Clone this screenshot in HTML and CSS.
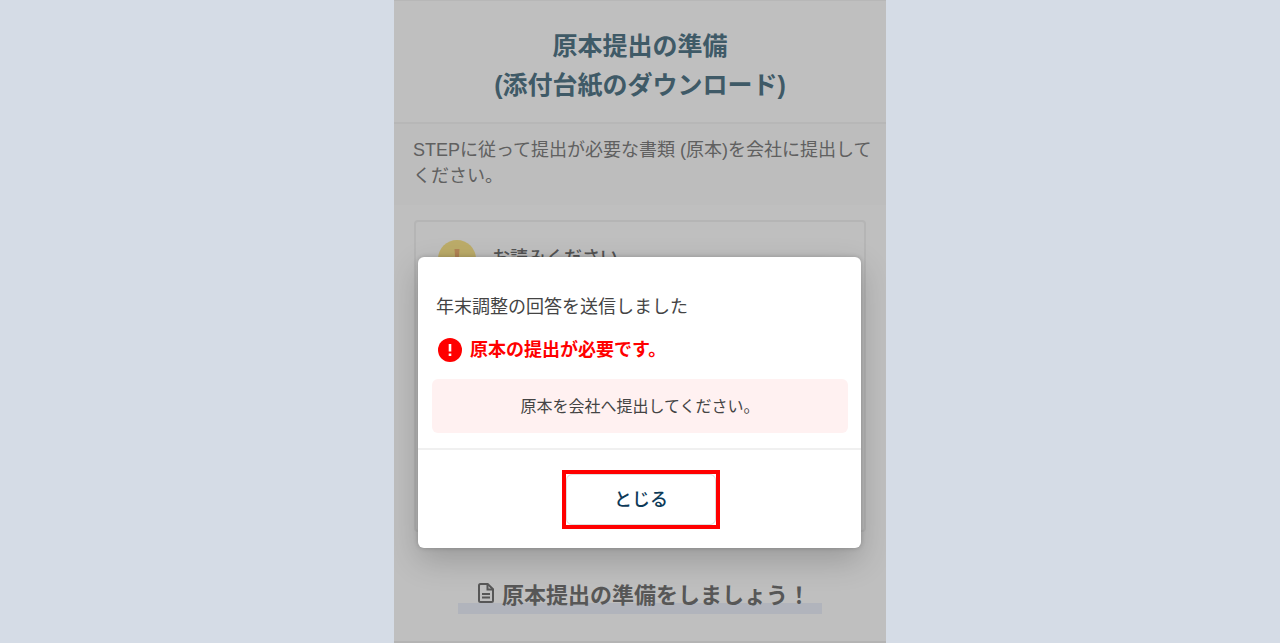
FILE: index.html
```
<!DOCTYPE html>
<html lang="ja">
<head>
  <meta charset="UTF-8">
  <meta name="viewport" content="width=device-width, initial-scale=1.0">
  <title>原本提出の準備</title>
  <link rel="stylesheet" href="styles.css">
</head>
<body>

  <div class="screen">
    <main class="page">
      <header class="header">
        <h1>原本提出の準備<br>(添付台紙のダウンロード)</h1>
      </header>

      <p class="intro">STEPに従って提出が必要な書類 (原本)を会社に提出してください。</p>

      <section class="card">
        <svg class="card-icon" viewBox="0 0 38 38" aria-hidden="true">
          <circle cx="19" cy="19" r="19" fill="#fbe68c"/>
          <path d="M16.5 9h5l-1 13h-3z" fill="#eeb070"/>
          <circle cx="19" cy="27" r="2.5" fill="#eeb070"/>
        </svg>
        <span class="card-title">お読みください</span>
      </section>

      <h2 class="step-title">
        <svg class="doc-icon" viewBox="0 0 16 20" aria-hidden="true">
          <path d="M2.5 1h7.2L15 6.2v11.3a1.5 1.5 0 0 1-1.5 1.5h-11A1.5 1.5 0 0 1 1 17.5v-15A1.5 1.5 0 0 1 2.5 1z"/>
          <path d="M9.5 1v5.5H15M4 11h8M4 14.5h8"/>
        </svg>
        原本提出の準備をしましょう！
      </h2>
    </main>

    <div class="overlay">
      <div class="modal" role="dialog" aria-modal="true" aria-labelledby="modalTitle">
        <div class="modal-body">
          <p class="modal-title" id="modalTitle">年末調整の回答を送信しました</p>
          <p class="alert">
            <svg class="alert-icon" viewBox="0 0 24 24" aria-hidden="true">
              <circle cx="12" cy="12" r="12" fill="#f00"/>
              <path d="M10.7 6h2.6v7.5h-2.6zM10.7 15.5h2.6v2.6h-2.6z" fill="#fff"/>
            </svg>
            <span>原本の提出が必要です。</span>
          </p>
          <p class="notice">原本を会社へ提出してください。</p>
        </div>
        <div class="modal-footer">
          <div class="highlight">
            <button type="button" class="close-button">とじる</button>
          </div>
        </div>
      </div>
    </div>
  </div>

</body>
</html>
```
FILE: styles.css
```
* {
  box-sizing: border-box;
}

body {
  margin: 0;
  background: #d5dce6;
  color: #444;
  font-family: "Liberation Sans", "Noto Sans CJK JP", sans-serif;
  font-size: 18px;
}

h1,
h2,
p {
  margin: 0;
}

.screen {
  position: relative;
  max-width: 492px;
  min-height: 100vh;
  margin: 0 auto;
  background: #fff;
  border-bottom: 2px solid #b4b4b4;
}

.page {
  display: flex;
  flex-direction: column;
}

/* Page behind the dialog */
.header {
  padding: 26px 16px 17px;
  border-top: 1px solid #f4f4f4;
  border-bottom: 2px solid #f4f4f4;
  text-align: center;
}

.header h1 {
  color: #54788a;
  font-size: 25px;
  font-weight: bold;
  line-height: 39px;
}

.intro {
  padding: 13px 8px 16px 19px;
  background: #fcfcfc;
  color: #808080;
  line-height: 26px;
}

.card {
  display: flex;
  align-items: flex-start;
  gap: 16px;
  min-height: 312px;
  margin: 15px 20px 0;
  padding: 18px 22px;
  border: 2px solid #f2f2f2;
  border-radius: 4px;
}

.card-icon {
  width: 38px;
  height: 38px;
}

.card-title {
  color: #707070;
  font-weight: 500;
  line-height: 36px;
}

.step-title {
  display: flex;
  align-items: center;
  align-self: center;
  gap: 8px;
  margin-top: 46px;
  padding: 0 12px 0 20px;
  background: linear-gradient(transparent 70%, #ecf1fb 70%);
  color: #757575;
  font-size: 22px;
  font-weight: bold;
  line-height: 36px;
}

.doc-icon {
  width: 16px;
  height: 20px;
  margin-bottom: 6px;
  fill: none;
  stroke: #757575;
  stroke-width: 2;
}

/* Dialog */
.overlay {
  position: absolute;
  inset: 0;
  padding: 257px 25px 0 24px;
  background: rgba(0, 0, 0, 0.25);
  overflow: hidden;
}

.modal {
  background: #fff;
  border-radius: 6px;
  box-shadow: 0 12px 32px rgba(0, 0, 0, 0.2), 0 0 5px rgba(0, 0, 0, 0.2);
}

.modal-body {
  padding: 37px 13px 15px 14px;
}

.modal-title {
  padding-left: 4px;
  line-height: 26px;
}

.alert {
  display: flex;
  align-items: center;
  gap: 8px;
  margin: 16px 0 15px;
  padding-left: 6px;
  color: #f00;
  font-weight: bold;
  line-height: 28px;
}

.alert-icon {
  width: 24px;
  height: 24px;
}

.notice {
  padding: 15px 14px 13px;
  background: #fff1f1;
  border-radius: 6px;
  font-size: 16px;
  line-height: 26px;
  text-align: center;
}

.modal-footer {
  display: flex;
  justify-content: center;
  padding: 20px 0 19px 3px;
  border-top: 2px solid #f0f0f0;
}

.highlight {
  border: 4px solid #f00;
}

.close-button {
  display: block;
  width: 150px;
  height: 51px;
  padding: 0 0 4px;
  border: 1px solid #ddd;
  border-radius: 6px;
  background: #fff;
  color: #0d3a58;
  font: inherit;
  font-weight: 500;
  cursor: pointer;
}
```
